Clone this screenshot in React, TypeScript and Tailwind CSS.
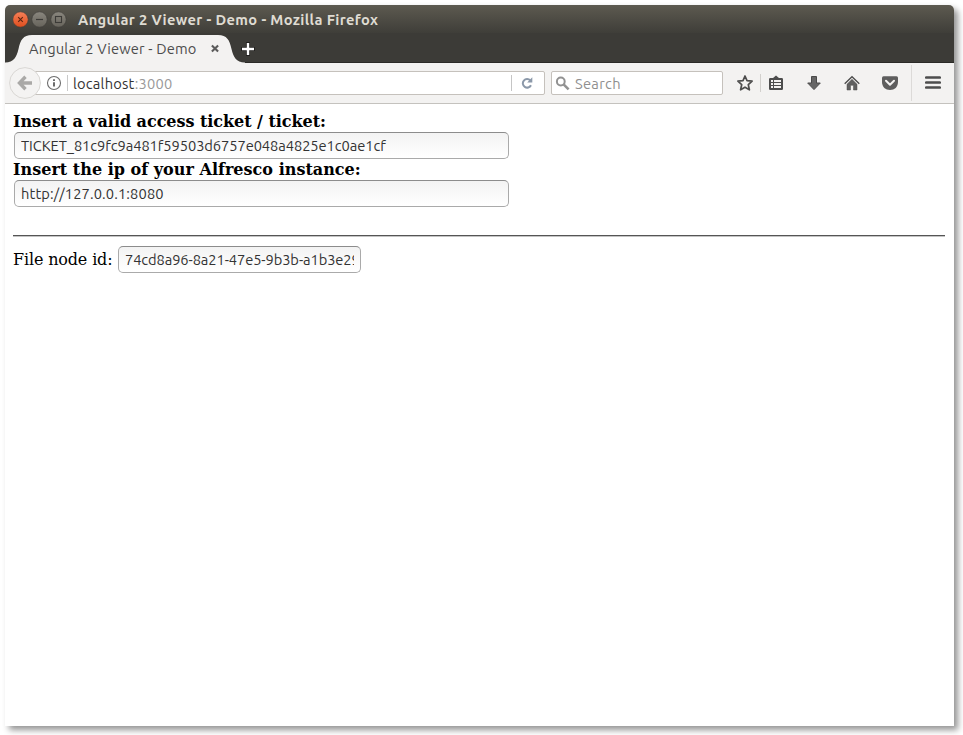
import React from "react";

const ui = "font-['Ubuntu','Noto_Sans',sans-serif]";

function TitleBar() {
  return (
    <div className="relative flex h-7 shrink-0 items-center rounded-t-[5px] bg-gradient-to-b from-[#5d5a50] to-[#3f3e39] pl-2">
      <svg width="56" height="18" viewBox="0 0 56 18" className="shrink-0">
        <defs>
          <linearGradient id="close" x1="0" y1="0" x2="0" y2="1">
            <stop offset="0" stopColor="#f58058" />
            <stop offset="1" stopColor="#e04e1e" />
          </linearGradient>
          <linearGradient id="gray" x1="0" y1="0" x2="0" y2="1">
            <stop offset="0" stopColor="#8a877e" />
            <stop offset="1" stopColor="#66635b" />
          </linearGradient>
        </defs>
        <circle cx="7.5" cy="9.5" r="7.7" fill="url(#close)" stroke="#3c3b37" strokeWidth="0.6" />
        <path d="M5.200 7.200l4.600 4.600M9.800 7.200l-4.600 4.600" stroke="#5a2410" strokeWidth="1.100" />
        <circle cx="26.5" cy="9.5" r="7.7" fill="url(#gray)" stroke="#3c3b37" strokeWidth="0.6" />
        <path d="M23 9.5h7" stroke="#3c3b37" strokeWidth="1.2" />
        <circle cx="45.5" cy="9.5" r="7.7" fill="url(#gray)" stroke="#3c3b37" strokeWidth="0.6" />
        <rect x="42.5" y="6.5" width="6" height="6" fill="none" stroke="#3c3b37" strokeWidth="1.1" />
      </svg>
      <span className={`ml-[9px] whitespace-nowrap pt-px text-[14.667px] leading-5 font-bold tracking-[0.36px] text-[#dfdbd2] ${ui}`}>
        Angular 2 Viewer - Demo - Mozilla Firefox
      </span>
    </div>
  );
}

function TabStrip() {
  return (
    <div className="relative flex h-[30px] shrink-0 items-center border-b border-[#2b2a27] bg-[#3c3b37]">
      <svg width="246" height="30" viewBox="0 0 246 30" className="absolute top-0 left-0">
        <path
          d="M0 30V29.5C9 29.5 11.5 24 13.5 16C15.5 7 18 2 27 2H213C222 2 224.5 7 226.5 16C228.500 24 231 29.500 240 29.500V30Z"
          fill="#f3f2f1"
        />
      </svg>
      <div className="relative flex w-[230px] items-center pt-[2px] pl-6">
        <span className={`whitespace-nowrap text-[14.667px] leading-5 tracking-[0.17px] text-[#4c4c4c] ${ui}`}>Angular 2 Viewer - Demo</span>
      </div>
      <svg width="9" height="9" viewBox="0 0 9 9" className="absolute top-[11px] left-[205px]">
        <path d="M1.900 1.400L8.100 7.600M8.100 1.400L1.900 7.600" stroke="#5b5b5b" strokeWidth="2.100" />
      </svg>
      <svg width="15" height="15" viewBox="0 0 15 15" className="mt-[3px] ml-[6px]">
        <path d="M7 0v14M0 7h14" stroke="#22211f" strokeWidth="4" />
        <path d="M7 1v12M1 7h12" stroke="#fff" strokeWidth="2.400" />
      </svg>
    </div>
  );
}

function Toolbar() {
  return (
    <div className="flex h-[41px] shrink-0 items-center border-b border-[#c4c2be] bg-[#f3f2f1]">
      <svg width="32" height="32" viewBox="0 0 32 32" className="relative z-10 ml-1 shrink-0">
        <circle cx="16" cy="16" r="15.400" fill="#f4f3f2" stroke="#d9d7d4" />
        <path d="M23 16H11M16.500 9.800L10.500 16L16.500 22.200" fill="none" stroke="#aaa9a7" strokeWidth="3.400" />
      </svg>
      <div className="-ml-[9px] flex h-6 w-[513px] items-center rounded-[2px] border border-[#c5c1bc] bg-white">
        <svg width="16" height="16" viewBox="0 0 16 16" className="ml-[13px] shrink-0">
          <circle cx="8" cy="8" r="6.500" fill="none" stroke="#6d6d6d" strokeWidth="1.100" />
          <path d="M8 7.200V11.500M8 4.300V6" stroke="#5c5c5c" strokeWidth="1.800" />
        </svg>
        <div className="ml-[5px] h-4 w-px bg-[#c9c9c9]" />
        <span className={`ml-[5px] whitespace-nowrap pt-[2px] text-[14.667px] leading-5 tracking-[0.22px] text-[#333] ${ui}`}>
          localhost<span className="text-[#999]">:3000</span>
        </span>
        <div className="ml-auto h-4 w-px bg-[#c5c5c5]" />
        <svg width="12" height="12" viewBox="0 0 12 12" className="mr-[11px] ml-[9px] shrink-0">
          <path d="M9.300 3.400A4.300 4.300 0 1 0 10 8.200" fill="none" stroke="#8b98a9" strokeWidth="2" />
          <path d="M11.300 0.300V5.500H6.200Z" fill="#8b98a9" />
        </svg>
      </div>
      <div className="ml-[6px] flex h-6 w-[172px] items-center rounded-[2px] border border-[#c5c1bc] bg-white">
        <svg width="15" height="15" viewBox="0 0 15 15" className="ml-[3px] shrink-0">
          <circle cx="5.800" cy="5.500" r="3.900" fill="none" stroke="#929292" strokeWidth="2" />
          <path d="M8.600 8.300L13.600 13.300" stroke="#929292" strokeWidth="2.600" />
        </svg>
        <span className={`ml-[5px] pt-[2px] text-[14.667px] leading-5 tracking-[0.3px] text-[#8f8f8f] ${ui}`}>Search</span>
      </div>
      <svg width="18" height="18" viewBox="0 0 18 18" className="ml-[13px] shrink-0">
        <path
          d="M9 2L11 6.700L16.100 7.200L12.300 10.700L13.400 15.800L9 13.200L4.600 15.800L5.700 10.700L1.900 7.200L7 6.700Z"
          fill="none" stroke="#4d4d4d" strokeWidth="1.700" strokeLinejoin="round"
        />
      </svg>
      <div className="ml-[6px] h-[18px] w-px bg-[#d2d0cd]" />
      <svg width="16" height="16" viewBox="0 0 16 16" className="ml-[7px] shrink-0">
        <path d="M2.200 3H5L8 0.500L11 3H13.800Q15 3 15 4.200V13.800Q15 15 13.800 15H2.200Q1 15 1 13.800V4.200Q1 3 2.200 3Z" fill="#4d4d4d" />
        <path d="M3 5H5V7H3ZM6 5H13V7H6ZM3 8H5V10H3ZM6 8H13V10H6ZM3 11H5V13H3ZM6 11H13V13H6Z" fill="#f3f2f1" />
      </svg>
      <svg width="16" height="16" viewBox="0 0 16 16" className="ml-[22px] shrink-0">
        <path d="M5.500 1.500H10.500V8H14.300L8 14.600L1.700 8H5.500Z" fill="#666" stroke="#4a4a4a" strokeWidth="1" strokeLinejoin="round" />
      </svg>
      <svg width="18" height="16" viewBox="0 0 18 16" className="ml-[21px] shrink-0">
        <path d="M1.700 8.800L9 1.800L16.300 8.800" fill="none" stroke="#4d4d4d" strokeWidth="1.400" />
        <path d="M4 9.200L9 4.300L14 9.200V15H10.500V10.300H7.500V15H4Z" fill="#606060" stroke="#4d4d4d" strokeWidth="0.500" />
      </svg>
      <svg width="18" height="16" viewBox="0 0 18 16" className="ml-5 shrink-0">
        <path d="M2.500 1.300H15.500Q17 1.300 17 2.800V7C17 12 13.500 15 9 15S1 12 1 7V2.800Q1 1.300 2.500 1.300Z" fill="#5e5e5e" />
        <path d="M5 5.800L9 9.800L13 5.800" fill="none" stroke="#f3f2f1" strokeWidth="2" strokeLinecap="round" strokeLinejoin="round" />
      </svg>
      <div className="ml-3 h-9 w-px bg-[#dcdad8]" />
      <svg width="16" height="14" viewBox="0 0 16 14" className="ml-[13px] shrink-0">
        <path d="M1.300 1.500H14.700M1.300 6.500H14.700M1.300 11.500H14.700" stroke="#4d4d4d" strokeWidth="2.700" strokeLinecap="round" />
      </svg>
    </div>
  );
}

const field = `block h-[27px] rounded-[5px] border border-[#aaa] border-t-[#8c8c8c] bg-gradient-to-b from-[#f3f3f3] to-white px-[6px] text-[14.667px] text-[#333] outline-none ${ui}`;

export default function App() {
  return (
    <div className="h-[735px] w-[963px] overflow-hidden bg-white pt-[5px] pl-[5px]">
      <div className="flex h-[721px] w-[949px] flex-col rounded-t-[5px] bg-white shadow-[4px_4px_6px_rgba(0,0,0,0.42)]">
        <TitleBar />
        <TabStrip />
        <Toolbar />
        <main className="px-2 pt-2 font-['DejaVu_Serif',serif] text-[16px] leading-[19px] text-black">
          <label className="block h-5 whitespace-nowrap font-bold tracking-[-0.04px]">Insert a valid access ticket / ticket:</label>
          <input className={`${field} ml-px w-[495px] tracking-[-0.065px]`} defaultValue="TICKET_81c9fc9a481f59503d6757e048a4825e1c0ae1cf" />
          <label className="mt-px block h-5 whitespace-nowrap font-bold tracking-[0.02px]">Insert the ip of your Alfresco instance:</label>
          <input className={`${field} ml-px w-[495px] tracking-[0.13px]`} defaultValue="http://127.0.0.1:8080" />
          <hr className="mt-7 mr-px h-[2px] border-0 border-t border-b border-t-[#555] border-b-[#c4c4c4]" />
          <div className="mt-[9px] flex items-center whitespace-nowrap">
            <span className="w-[99px] tracking-[-0.15px]">File node id:</span>
            <input className={`${field} ml-[6px] w-[243px] tracking-[-0.085px]`} defaultValue="74cd8a96-8a21-47e5-9b3b-a1b3e29b8a3c" />
          </div>
        </main>
      </div>
    </div>
  );
}
